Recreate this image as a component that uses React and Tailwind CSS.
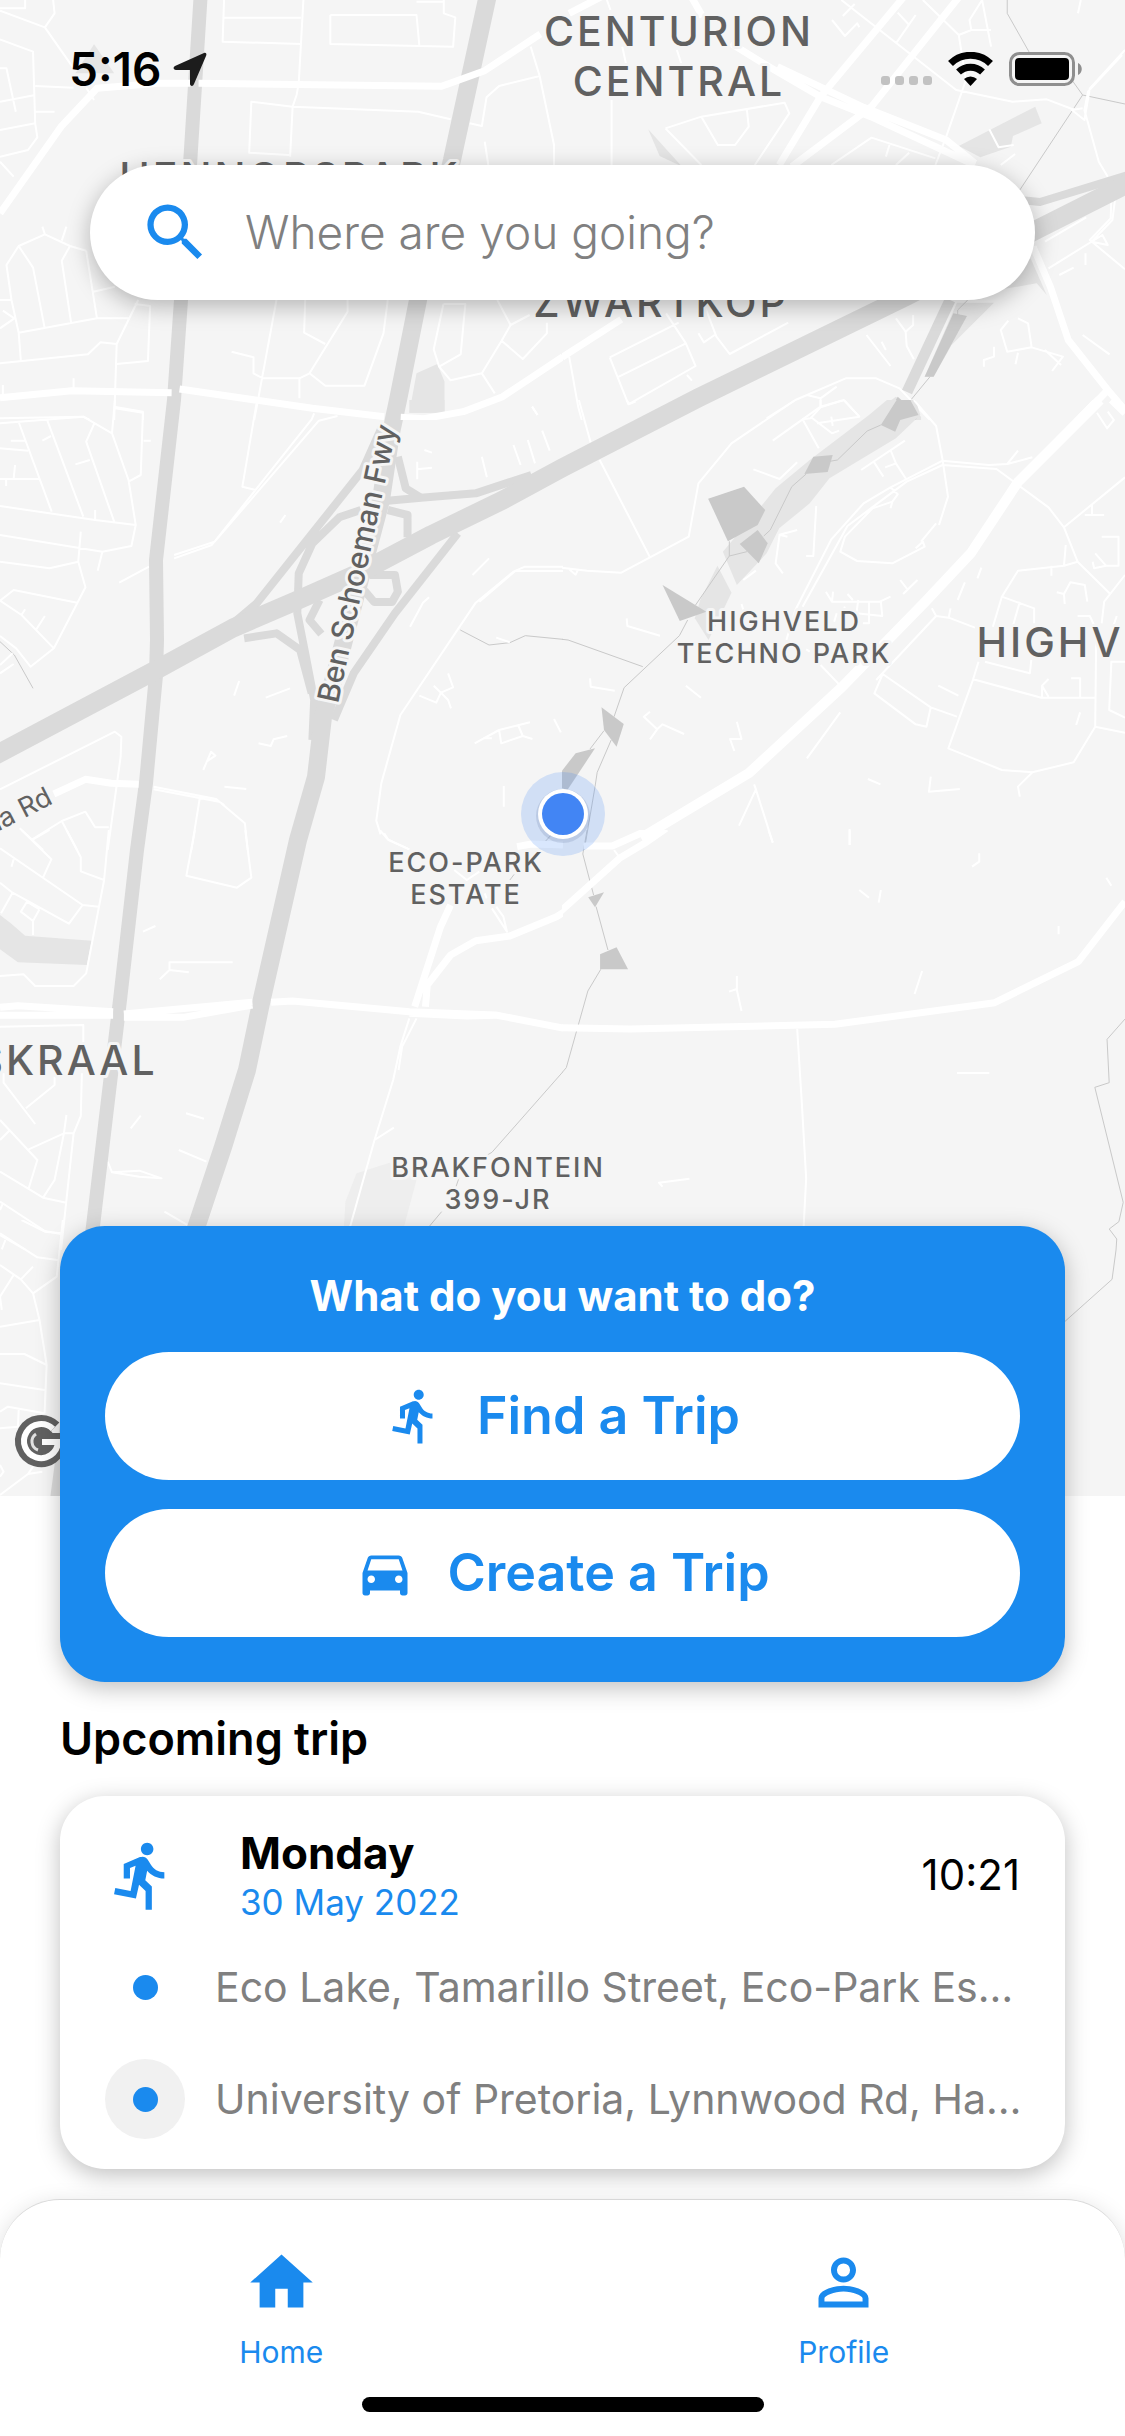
import React from "react";
import {
  MdDirectionsCar,
  MdDirectionsRun,
  MdPersonOutline,
  MdSearch,
} from "react-icons/md";

/* Map sheets: each one has its own drawing grid and a place on the map. */
const SHEETS = [
  {
    x: 0, y: 0, h: 420, grid: "0 0 1568 1260",
    parks: ["M262,133 L318,220 H210Z", "M1160,1120 L1218,1092 L1238,1145 V1238 H1140Z"],
    streets:
      "M0,25 H70 V0 M0,32 L125,82 L152,40 L148,0 M125,82 L205,205 M0,118 L92,155 L98,370 L104,412 L78,450 L0,470 M0,205 H18 L44,335 M0,305 L98,285 M98,335 H152 M0,390 L98,370 M98,258 L205,263 M0,485 L38,530 M240,263 L262,300 M624,0 L620,125 L840,132 M620,53 H838 M845,0 L832,250 L826,285 L815,320 L808,470 M815,320 L700,305 L694,458 L805,465 M815,320 L1165,335 L1255,358 M920,45 H1160 L1168,138 M920,45 V132 L1262,140 L1268,52 L1236,40 V0 M1160,5 H1236 M1478,140 L1503,228 L1543,435 V495 M1503,228 L1390,258 L1355,292 L1342,378 L1308,370 M1350,425 L1360,495 M118,680 L125,703 L195,738 L240,752 M185,680 L172,722 M125,703 L52,738 L18,795 L32,900 L52,998 L58,1082 M52,738 L92,803 L124,982 M195,738 L172,782 L198,968 M240,752 L270,955 M52,998 L270,955 H358 M260,875 L320,860 M385,900 L325,1032 L318,1260 M325,1032 L280,1027 L245,1063 L0,1090 M375,912 L418,918 L412,1083 L325,1092 M0,900 H30 M8,932 L40,955 L0,985 M8,1155 V1190 M205,1135 V1170 M0,1255 L232,1250 L250,1260 M318,1220 L398,1235 V1260 M770,900 L722,1180 L708,1260 M645,1055 L706,1072 V1120 L732,1135 H834 V1195 M834,1135 L862,1120 L968,935 V900 M850,900 L847,998 L906,1032 M862,1120 L906,1157 H1015 L1068,1000 L1080,900 M1235,912 L1208,1048 L1223,1100 L1255,1141 L1342,1120 L1378,1180 M1235,912 H1296 L1283,1063 L1223,1100 M1385,900 L1422,975 L1397,1022 L1342,1120 M1397,1022 L1456,1077 L1523,1000 V968 M1422,975 L1475,945 M1482,1220 L1497,1245",
    roads: "M0,640 L170,380 L270,265 L440,250 L530,250 M553,250 L1230,259 L1350,212 L1505,102 M0,1193 L200,1172 L478,1178 M500,1167 L870,1225 L1070,1250 M1116,1252 L1180,1256 L1290,1235 L1400,1190 L1568,1070",
  },
  {
    x: 562, y: 0, h: 420, grid: "0 0 1568 1260",
    parks: ["M240,388 L272,468 L325,495 H330Z", "M1105,438 L1318,320 L1336,370 L1256,408 L1250,440 L1165,472Z", "M1100,908 H1203 L1085,1035 L1035,1130 H1010Z", "M930,1190 L1000,1250 V1260 H840Z", "M1305,775 L1350,885 L1322,850 L1225,868Z"],
    waters: ["M1090,940 L1128,948 L1035,1130 H1010Z", "M935,1190 L993,1245 L985,1260 H898Z"],
    streets:
      "M138,300 V495 M125,0 L135,30 M168,140 L182,210 M320,150 L335,200 M288,385 L388,350 L620,308 L633,340 L537,495 M388,350 L434,435 H482 L520,380 L515,330 M288,385 L388,495 M752,60 L788,108 L822,70 L828,82 M778,0 L1098,270 L1255,305 L1350,298 L1428,330 M815,12 L782,48 M935,38 L967,75 M985,45 L930,130 M1005,0 L1105,105 L1125,240 L1070,410 L1040,495 M1105,105 L1140,90 H1195 M1140,90 L1135,60 L1170,0 L1195,140 M1445,0 L1437,40 M1568,150 L1470,265 L1455,360 L1420,330 L1450,325 M1560,165 L1465,275 L1455,330 L1495,485 L1520,530 M750,495 L862,413 L1040,475 M912,435 L902,470 M967,458 L930,495 M1190,388 L1216,442 L1258,435 M1222,495 L1262,462 M1540,600 L1533,660 L1475,725 L1520,735 L1505,705 L1355,805 M1530,600 L1528,655 L1470,720 L1568,808 M1458,760 V795 M1385,825 L1425,803 M1345,725 L1460,652 M133,1072 L325,968 M133,1072 L185,1213 L372,1098 L345,1030 L290,940 M153,1133 L345,1030 M348,1125 L362,1142 M380,1000 L395,1027 L425,1005 M398,920 L430,1010 L467,1062 L630,968 M848,1005 L915,1098 M890,1025 L902,1050 M930,955 L957,995 L960,1038 L980,1078 M957,995 L978,975 V945 M1270,955 L1298,970 L1308,1042 L1240,1055 L1222,990 L1243,962 M1308,1042 L1395,1070 L1365,1113 M1345,1050 L1390,1095 M1270,1058 L1263,1093 M1203,1040 V1070 L1175,1080 V1100 M1450,1005 L1525,1063 M20,1070 L45,1220 L55,1260 M570,1255 L650,1200 L790,1135 H875 L940,1165 L1025,1260 M682,1185 L720,1195 L765,1160 M720,1195 V1220 L670,1258 M720,1220 L785,1200 L828,1250",
    roads: "M20,40 L110,-10 M360,-10 L392,50 M960,-20 L720,290 L605,495 M1110,-15 L862,320 L640,500 M470,130 L560,190 L720,290 L860,350 L1150,495 M600,200 L840,322 L1070,420 L1150,490 M1312,740 L1360,860 L1410,1020 L1520,1170 L1568,1230 M1440,1260 L1520,1170 M0,1072 L165,958",
    streams: "M1240,0 V40 L1303,160 M1420,240 L1450,285 L1568,312 M1450,285 L1275,570 M1130,900 L1102,930 V950 M1025,1130 L960,1215",
  },
  {
    x: 0, y: 400, h: 450, grid: "0 0 1568 1350",
    parks: ["M1140,0 H1238 V38 H1140Z"],
    streets:
      "M320,0 L312,100 L358,240 L378,375 L366,438 L285,455 L0,405 M0,70 L232,50 L312,100 M262,72 L240,125 L318,365 M132,62 L232,350 M52,66 L144,335 M0,145 L78,152 M30,122 H70 M118,122 L142,108 M210,193 L250,180 M42,195 L38,235 M0,237 H110 M17,240 V258 M0,318 L265,360 L378,375 M265,330 V360 M225,395 L218,485 L238,562 L150,745 L85,800 L45,745 L0,708 M218,485 L138,505 L0,485 M285,455 L272,512 M215,608 L38,570 L0,602 L60,645 L150,745 M70,628 L60,645 M125,648 L100,690 M0,820 L38,792 M0,795 L35,760 M320,25 L398,38 L392,225 L358,245 M400,122 H420 M716,0 L675,260 L712,270 M875,40 L868,58 L590,435 L485,475 M940,48 L888,62 L598,425 L485,465 M332,548 L415,500 M780,368 L795,345 M652,887 L666,843 M740,893 L808,865 M720,1030 L754,1038 L762,1018 L800,1008 M566,1110 L588,1055 L600,1067 L575,1085 M625,1160 L686,1167 M428,1160 L602,1197 L682,1270 L690,1350 M428,1168 L610,1205 L625,1215 M557,1190 L533,1350 M0,1168 L320,995 L338,1010 L336,1070 L300,1350 M55,1285 L120,1350 M90,1318 L172,1263 L238,1235 L265,1282 H303 M172,1263 L215,1350 M1162,185 V238 M1162,208 L1203,203 M1182,150 L1203,158 M1342,170 L1356,232 M1430,135 L1450,195 M1470,120 L1490,190 M1510,92 L1531,152 M1482,20 L1497,45 M1362,475 L1316,525 M1195,592 L1178,608 L1142,680 M1568,500 H1462 L1430,515 L1325,608 L1115,945 L1062,1150 L1048,1262 L1060,1303 M1568,513 H1435 L1335,605 M1070,1300 L1082,1320 L1140,1348 M1168,887 L1215,908 L1228,878 L1208,857 M1248,820 L1262,862 L1228,878 L1248,900 L1256,925 M1322,1030 L1390,990 L1476,967 M1390,990 L1396,1030 L1456,1008 L1443,975 M1456,1008 L1483,1017 M1345,1015 H1370 M1543,957 L1562,997 M1403,1158 V1220 M1382,713 L1420,727",
    roads: "M150,1182 L238,1138 L310,1150 L386,1153",
    ramps:
      "M1068,70 L1010,210 L870,400 L715,610 L610,705 M1108,170 L1130,265 L1172,293 M1080,302 L1172,293 L1325,280 L1480,225 M1080,330 L1135,345 V412 M1005,330 L945,352 L870,430 L832,520 L828,640 L850,760 L875,900 L870,1020 M890,600 L862,660 L895,702 M1030,525 L1100,525 L1108,575 L1092,606 H1042 L1015,572 M1275,400 L1100,640 L985,820 L930,960 M680,715 L770,700 L836,750 L868,880",
    streams: "M1282,690 L1362,735 L1420,728 L1463,707 L1568,718 M0,725 L40,765 L92,865",
  },
  {
    x: 562, y: 400, h: 450, grid: "0 0 1568 1350",
    parks: ["M905,0 H985 L998,45 L930,115 L745,235 L690,310 L605,385 L570,460 L487,555 L448,455 L550,325 L595,265 L690,180 L855,45Z", "M433,497 L472,578 L440,650 L408,720 L370,655 L385,600Z"],
    waters: ["M932,0 H970 L993,45 L942,60 L928,95 L888,75Z", "M700,170 L754,165 L740,216 L675,222Z", "M407,296 L507,260 L566,330 L545,375 L462,424Z", "M545,390 L573,430 L548,490 L495,432Z", "M280,555 L402,635 L328,663Z", "M110,922 L172,972 L152,1040 L117,990Z", "M0,1112 L38,1060 L92,1045 L15,1170 L-25,1155Z"],
    streets:
      "M47,0 L80,128 M105,180 L245,472 M650,0 L472,130 L380,250 L353,410 L245,472 L165,518 L70,512 L0,503 M45,508 L38,524 L20,508 M180,0 L187,12 L205,5 M587,122 L670,58 L692,55 L720,22 V0 M670,58 L715,145 M692,50 L752,100 L772,92 M720,22 L785,0 L828,50 L710,70 M750,50 L754,78 M533,208 L606,237 L655,187 M833,210 L955,122 M915,150 L930,190 L960,240 M868,185 L895,230 M900,202 L930,190 M980,0 L1042,78 L1060,180 L1075,290 L1050,375 M1060,182 L1190,195 L1240,192 L1310,172 M1240,192 L1270,152 M1060,195 L1210,207 L1355,322 L1398,382 L1436,485 L1525,580 M1060,182 L915,262 L840,310 L750,418 L650,630 L625,720 M1060,195 L960,245 L860,325 L795,378 L670,620 M915,262 L935,283 L920,305 L865,325 L788,410 L775,455 L822,483 L920,490 L1010,440 L1005,425 L985,445 M1000,425 L1042,370 M920,305 L915,325 M708,318 L700,468 H680 M655,390 L606,404 L595,490 L615,520 M606,404 L628,410 M540,512 L505,540 M942,540 L962,568 M950,582 L990,540 M735,575 L752,605 H885 L915,590 M752,605 L755,575 M795,582 L810,600 M825,600 L820,640 L892,648 L888,605 M855,605 V670 H838 M788,620 L780,640 M765,640 L758,665 M500,612 L505,630 M1122,547 L1102,600 M1168,503 L1157,535 M1030,625 L1042,648 L875,840 M1042,648 L1077,653 L1150,683 M1082,625 L1077,653 M1490,38 L1518,85 L1537,60 L1520,35 M1568,232 L1398,382 M1476,313 V345 M1456,345 H1510 M1503,410 H1550 V497 H1515 L1485,460 M1478,485 L1482,505 L1515,497 M1436,485 L1398,497 L1270,512 L1225,590 L1200,680 M1403,435 L1398,497 M1363,497 V527 M1378,577 L1398,582 L1416,547 L1456,555 L1463,605 M1398,582 L1400,612 M1568,525 L1510,605 L1503,670 M1225,590 L1315,625 V670 M1275,605 L1250,700 M1436,648 H1470 L1488,690 L1485,980 M1545,648 L1535,680 M180,655 L182,678 L273,707 M78,835 L80,860 L147,872 M345,857 L387,893 M245,935 L228,950 L265,988 L245,1018 M265,988 L280,973 L340,1002 M487,965 L500,1017 H468 L480,1053 M775,937 L682,1075 M680,748 L690,755 M720,795 L775,857 M893,822 L870,880 L985,973 L1015,980 L1027,922 L1100,950 M893,822 L1027,922 M1048,857 L1104,887 M1160,785 L1145,838 L1076,1045 L1225,1110 L1310,1117 L1425,1087 L1485,980 L1568,998 M1145,838 L1335,893 H1485 M1178,785 L1303,820 L1307,780 M1355,837 L1337,857 V893 M1337,857 L1355,890 M1418,835 H1443 V893 M1443,937 L1432,975 M1568,785 H1530 L1524,930 L1568,953 M1310,1117 L1270,1160 L1275,1190 M1027,1130 L1022,1175 L1108,1167 M852,1137 L887,1153 M535,1153 L540,1168 L493,1277 M540,1168 L587,1328 M801,1287 V1335",
    roads: "M1500,-10 L1270,245 M1530,0 L1568,40",
    streams: "M970,0 L960,15 M888,75 L850,93 L767,180 L740,185 M680,222 L640,260 L580,390 L562,408 M515,455 L466,468 V424 M466,468 L372,615 M350,660 L327,707 L173,863 L145,950 M0,718 L17,720 L225,800 M117,992 L78,1047 M137,1020 L98,1117 L92,1160 L62,1350",
  },
  {
    x: 0, y: 830, h: 420, grid: "0 0 1568 1260",
    parks: ["M0,255 L30,280 L70,317 L255,332 L242,405 L50,397 L0,358Z"],
    fields: ["M993,1030 L1085,998 L1160,1050 L1125,1190 H958 L962,1115Z"],
    streets:
      "M303,0 L290,150 L240,430 L205,468 H98 L66,433 L0,438 M60,0 L143,88 L120,142 M92,28 L138,0 M185,0 L225,82 V124 L290,150 M0,55 L230,225 L275,230 M230,225 L192,281 L35,188 L0,158 M35,188 L3,250 M38,88 L32,110 M110,238 L92,273 V315 M75,215 L58,245 L92,273 M75,215 L110,238 M543,0 L519,137 L660,173 L700,143 L683,0 M398,305 L433,288 M445,448 L472,420 L526,427 M472,420 V397 H648 M0,590 L232,585 V640 M228,730 L225,858 L205,910 L170,1260 M205,910 H178 L80,958 M185,855 L178,910 L152,1050 L120,1103 M10,730 V758 L98,882 M152,740 V765 L72,835 M0,870 L104,990 L80,1075 M25,903 L0,930 M0,1025 L120,1103 L185,1118 M0,1115 L125,1203 L170,1212 M8,1120 L0,1140 M0,1215 L72,1260 M392,857 L364,895 M518,850 L568,866 M498,960 L575,995 M458,1145 L525,1187 M300,995 L312,1027 L388,1022 L450,1045 L388,1040 L312,1027 M1140,565 L1115,650 L1095,750 L1043,930 L975,1190 M1160,565 L1120,650 L1110,720 M1043,930 L1097,893 M1058,0 L1080,28 L1140,58 M1370,235 L1412,305 L1402,260 L1382,230 M1265,120 L1300,150 L1335,125 M1350,190 L1355,205",
    roads: "M0,532 L50,527 L315,545 M0,556 H315 M345,562 H510 L703,525 M345,552 L703,517 M755,517 L815,513 L1140,545 L1380,555 L1568,594 M1140,550 L1300,558 L1380,556 M1255,225 L1227,290 L1155,530 M1185,530 L1190,465 L1255,375 L1325,332 L1420,318 L1550,260 L1580,240 M1440,50 L1480,42 L1568,45",
    streams: "M1568,725 L1370,967 L1357,975 M1278,1045 L1270,1070 M1230,1145 L1195,1190 M1432,133 L1420,150 M1535,15 L1518,35",
  },
  {
    x: 562, y: 830, h: 420, grid: "0 0 1568 1260",
    waters: ["M73,202 L117,187 L92,232Z", "M106,373 L152,352 L184,418 H106Z"],
    streets:
      "M575,0 L587,38 M801,0 V45 M1162,70 V95 L1142,110 M828,180 L855,203 M888,180 L882,218 M1516,143 L1530,167 M1383,288 V313 M1003,423 L982,492 M465,485 L487,477 M487,438 V480 L500,543 M1100,729 H1190 M655,597 L668,820 L680,1045 L673,1190 M280,1070 L270,1058 L355,1046 M145,60 L160,82",
    roads: "M290,-5 L230,40 L160,85 L-5,245 M60,48 H140 L250,-5 M-5,593 L190,597 L760,583 L1205,518 L1438,395 L1568,215",
    streams: "M70,0 L58,72 L88,195 M95,230 L128,360 M108,418 L72,483 L12,713 L0,728 M1568,567 L1518,628 L1524,758 L1484,772 L1563,1117 L1551,1175 L1524,1197 L1545,1227 L1543,1260",
  },
  {
    x: 562, y: 1250, h: 246, grid: "0 0 1568 738",
    streams: "M1543,0 L1532,88 L1400,215",
  },
  {
    x: 0, y: 1220, h: 276, grid: "0 0 1568 828",
    streets:
      "M60,0 L125,35 L170,40 M0,40 L104,112 L160,120 M15,60 L5,88 M175,0 L158,170 L92,220 L58,178 L0,135 M58,178 L92,140 M38,165 L0,230 L5,270 M92,220 L110,300 L130,435 L124,580 M0,320 L110,300 M0,402 H68 L130,435 M0,490 L124,510 M124,580 L22,560 L0,575 M52,570 L50,620 L0,625 M92,740 L78,762 L0,825 M78,762 L118,755 M0,735 L10,755 L0,770",
  },
];

const FREEWAYS = [
  "M201,-10 L190,165 L181,300 L174,400 L156,560 L157,640 L156,675 L146,783 L137,850 L120,1000 L108,1100 L93,1226 L57,1500",
  "M489,-10 L452,160 L418,300 L398,400 L391,433 L381,500 L359,583 L337,667 L323,717 L316,777 L298,840 L261,1003 L247,1070 L223,1147 L192,1240",
  "M-10,758 L156,670 L233,628 L298,600 L359,573 L431,535 L503,500 L562,468 L698,398 L907,296 L1036,230 L1135,180",
];

const MAP_LABELS = [
  { lines: ["CENTURION", "CENTRAL"], x: 679, y: 46, big: true },
  { lines: ["HENNOPSPARK"], x: 290, y: 192, big: true },
  { lines: ["ZWARTKOP"], x: 661, y: 317, big: true },
  { lines: ["HIGHV"], x: 1050, y: 657, big: true },
  { lines: ["SKRAAL"], x: 67, y: 1075, big: true },
  { lines: ["HIGHVELD", "TECHNO PARK"], x: 784, y: 631 },
  { lines: ["ECO-PARK", "ESTATE"], x: 466, y: 872 },
  { lines: ["BRAKFONTEIN", "399-JR"], x: 498, y: 1177 },
];

function Sheet({ sheet, children }) {
  return (
    <svg
      x={sheet.x}
      y={sheet.y}
      width="563"
      height={sheet.h}
      viewBox={sheet.grid}
      preserveAspectRatio="none"
    >
      {children}
    </svg>
  );
}

function Line({ d, color, width }) {
  return (
    <path
      d={d}
      fill="none"
      stroke={color}
      strokeWidth={width}
      strokeLinejoin="round"
      vectorEffect="non-scaling-stroke"
    />
  );
}

function CityMap() {
  return (
    <svg
      role="img"
      aria-label="Map of Centurion around Eco-Park Estate"
      className="absolute inset-0 h-full w-full bg-[#f5f5f5]"
      viewBox="0 0 1125 1496"
      preserveAspectRatio="xMidYMin slice"
    >
      {SHEETS.map((s) => (
        <Sheet key={`land-${s.x}-${s.y}`} sheet={s}>
          {(s.fields || []).map((d) => <path key={d} d={d} fill="#eeeeee" />)}
          {(s.parks || []).map((d) => <path key={d} d={d} fill="#e5e5e5" />)}
          {s.streams && <Line d={s.streams} color="#c9c9c9" width="1" />}
          {(s.waters || []).map((d) => <path key={d} d={d} fill="#c9c9c9" />)}
          {s.streets && <Line d={s.streets} color="#ffffff" width="2" />}
        </Sheet>
      ))}
      {SHEETS.map((s) => (
        <Sheet key={`ramps-${s.x}-${s.y}`} sheet={s}>
          {s.ramps && <Line d={s.ramps} color="#dadada" width="8" />}
        </Sheet>
      ))}
      <Line d="M1020,200 L1040,202 L1135,173" color="#dadada" width="8" />
      <Line d="M950,300 L907,392" color="#dadada" width="11" />
      <Line d={FREEWAYS[0]} color="#dadada" width="14" />
      <Line d={FREEWAYS[1]} color="#dadada" width="18" />
      <Line d={FREEWAYS[2]} color="#dadada" width="19" />
      {SHEETS.map((s) => (
        <Sheet key={`roads-${s.x}-${s.y}`} sheet={s}>
          {s.roads && <Line d={s.roads} color="#ffffff" width="7" />}
        </Sheet>
      ))}
      <Line d="M1100,400 L1018,482 L971,553 L925,602 L842,687 L749,773 L641,838" color="#ffffff" width="10" />

      <g fill="#616161" stroke="#f5f5f5" strokeWidth="6" strokeLinejoin="round" className="font-medium [paint-order:stroke]">
        {MAP_LABELS.map((label) => (
          <text
            key={`${label.lines[0]}-${label.x}`}
            textAnchor="middle"
            className={label.big ? "text-[41px] tracking-[3px]" : "text-[27px] tracking-[2px]"}
          >
            {label.lines.map((line, i) => (
              <tspan key={line} x={label.x} y={label.y + i * (label.big ? 50 : 32)}>{line}</tspan>
            ))}
          </text>
        ))}
        <text transform="translate(338 704) rotate(-78)" className="text-[30px]">Ben Schoeman Fwy</text>
        <text transform="translate(54 803) rotate(-27)" textAnchor="end" className="text-[27px] font-normal">na Rd</text>
      </g>

      <g>
        <circle cx="563" cy="814" r="42" fill="#4285f4" fillOpacity="0.2" />
        <circle cx="563" cy="816" r="27" fill="#1e3a6e" fillOpacity="0.12" />
        <circle cx="563" cy="814" r="25" fill="#ffffff" />
        <circle cx="563" cy="814" r="21" fill="#4285f4" />
      </g>

      <g fill="none">
        <circle cx="41" cy="1441" r="14" fill="#616161" />
        <path d="M53,1429 A17,17 0 1 0 58,1442 H42" stroke="#616161" strokeWidth="18" />
        <path d="M53,1429 A17,17 0 1 0 58,1442 H42" stroke="#ffffff" strokeWidth="6" />
        <path d="M38,1450 A9,9 0 0 1 36,1434" stroke="#e0e0e0" strokeWidth="3" />
      </g>
    </svg>
  );
}

function StatusBar() {
  return (
    <div className="relative flex h-[165px] items-start justify-between pt-[42px] pr-[42px] pl-[69px]">
      <div className="flex items-center gap-3">
        <span className="text-[46px] leading-[54px] font-semibold">5:16</span>
        <svg width="34" height="34" viewBox="0 0 34 34" aria-hidden="true">
          <path d="M31,1 C33,0 34,2 33,4 L21,32 C20,35 17,34 17,32 V18 H3 C0,18 0,15 2,14Z" fill="#1c1c1c" />
        </svg>
      </div>
      <div className="flex h-[54px] items-center gap-4">
        <svg width="51" height="34" viewBox="0 0 51 34" aria-hidden="true" fill="#c2c2c2">
          <rect x="0" y="24" width="9" height="9" rx="3" />
          <rect x="14" y="24" width="9" height="9" rx="3" />
          <rect x="28" y="24" width="9" height="9" rx="3" />
          <rect x="42" y="24" width="9" height="9" rx="3" />
        </svg>
        <svg width="45" height="34" viewBox="0 0 45 34" aria-hidden="true">
          <g fill="none" stroke="#000000" strokeWidth="7">
            <path d="M2.5,11.5 A28.5,28.5 0 0 1 42.5,11.5" />
            <path d="M10.5,20 A17.5,17.5 0 0 1 34.5,20" />
          </g>
          <path d="M22.5,34 L16,27 A9.5,9.5 0 0 1 29,27Z" />
        </svg>
        <svg width="74" height="36" viewBox="0 0 74 36" aria-hidden="true">
          <rect x="1.5" y="2.5" width="63" height="31" rx="9" fill="#f5f5f5" stroke="#8f8f8f" strokeWidth="3" />
          <rect x="6" y="7" width="54" height="22" rx="4" />
          <path d="M69,12 C74,14 74,22 69,24Z" fill="#8f8f8f" />
        </svg>
      </div>
    </div>
  );
}

function SearchBar() {
  return (
    <label className="relative mx-[90px] flex h-[135px] items-center gap-8 rounded-full bg-white pr-16 pl-12 shadow-[0_6px_23px_rgba(0,0,0,0.27)]">
      <MdSearch className="size-[75px] shrink-0 text-[#1a8aee]" aria-hidden="true" />
      <input
        type="text"
        aria-label="Where are you going?"
        placeholder="Where are you going?"
        className="min-w-0 flex-1 bg-transparent text-[46px] font-light text-black outline-none placeholder:text-[#808080]"
      />
    </label>
  );
}

function ActionButton({ icon: Icon, children }) {
  return (
    <button
      type="button"
      className="flex h-32 w-full items-center justify-center gap-8 rounded-full bg-white text-[52px] leading-[64px] font-semibold text-[#1a8aee]"
    >
      <Icon className="size-[60px]" aria-hidden="true" />
      {children}
    </button>
  );
}

function TripStop({ text, last }) {
  return (
    <li className="flex items-center gap-[30px]">
      <span className={`flex size-20 shrink-0 items-center justify-center rounded-full ${last ? "bg-[#f1f1f1]" : ""}`}>
        <span className="size-[25px] rounded-full bg-[#1a8aee]" />
      </span>
      <span className="min-w-0 flex-1 text-[41px] leading-[50px] whitespace-nowrap text-[#808080]">{text}</span>
    </li>
  );
}

function HomeGlyph(props) {
  return (
    <svg viewBox="0 0 24 24" fill="currentColor" {...props}>
      <path d="M10 20v-6h4v6h5v-8h3L12 3 2 12h3v8z" />
    </svg>
  );
}

function NavItem({ icon: Icon, label }) {
  return (
    <a href="#" className="flex flex-1 flex-col items-center gap-[14px] text-[30px] leading-[36px] text-[#1a8aee]">
      <Icon className="size-[75px]" aria-hidden="true" />
      {label}
    </a>
  );
}

export default function App() {
  return (
    <div className="flex min-h-screen flex-col overflow-hidden bg-white font-['Inter','Liberation_Sans',sans-serif] text-black">
      <header className="relative h-[1496px]">
        <CityMap />
        <StatusBar />
        <SearchBar />
      </header>

      <main className="relative -mt-[270px] px-[60px] pb-[30px]">
        <section className="rounded-[45px] bg-[#1a8aee] px-[45px] pt-[45px] pb-[45px] shadow-[0_6px_23px_rgba(0,0,0,0.25)]">
          <h1 className="text-center text-[42px] leading-[50px] font-bold text-white">What do you want to do?</h1>
          <div className="mt-[31px] flex flex-col gap-[29px]">
            <ActionButton icon={MdDirectionsRun}>Find a Trip</ActionButton>
            <ActionButton icon={MdDirectionsCar}>Create a Trip</ActionButton>
          </div>
        </section>

        <h2 className="mt-[30px] text-[45px] leading-[54px] font-semibold">Upcoming trip</h2>

        <article className="mt-[30px] rounded-[45px] bg-white px-[45px] pt-[30px] pb-[30px] shadow-[0_6px_23px_rgba(0,0,0,0.25)]">
          <div className="flex items-center">
            <MdDirectionsRun className="size-[75px] shrink-0 text-[#1a8aee]" aria-hidden="true" />
            <div className="ml-[60px] flex-1">
              <h3 className="text-[44px] leading-[54px] font-bold">Monday</h3>
              <p className="text-[35px] leading-[44px] text-[#1a8aee]">30 May 2022</p>
            </div>
            <time className="text-[42px] leading-[50px]">10:21</time>
          </div>
          <ul className="mt-[23px] flex flex-col gap-8">
            <TripStop text="Eco Lake, Tamarillo Street, Eco-Park Es…" />
            <TripStop text="University of Pretoria, Lynnwood Rd, Ha…" last />
          </ul>
        </article>
      </main>

      <nav className="relative mt-auto flex flex-col rounded-t-[60px] border-t border-[#d8d8d8] bg-white pt-[45px] pb-6 shadow-[0_6px_23px_rgba(0,0,0,0.15)]">
        <div className="flex">
          <NavItem icon={HomeGlyph} label="Home" />
          <NavItem icon={MdPersonOutline} label="Profile" />
        </div>
        <div className="mt-[27px] h-[15px] w-[402px] self-center rounded-full bg-black" />
      </nav>
    </div>
  );
}
